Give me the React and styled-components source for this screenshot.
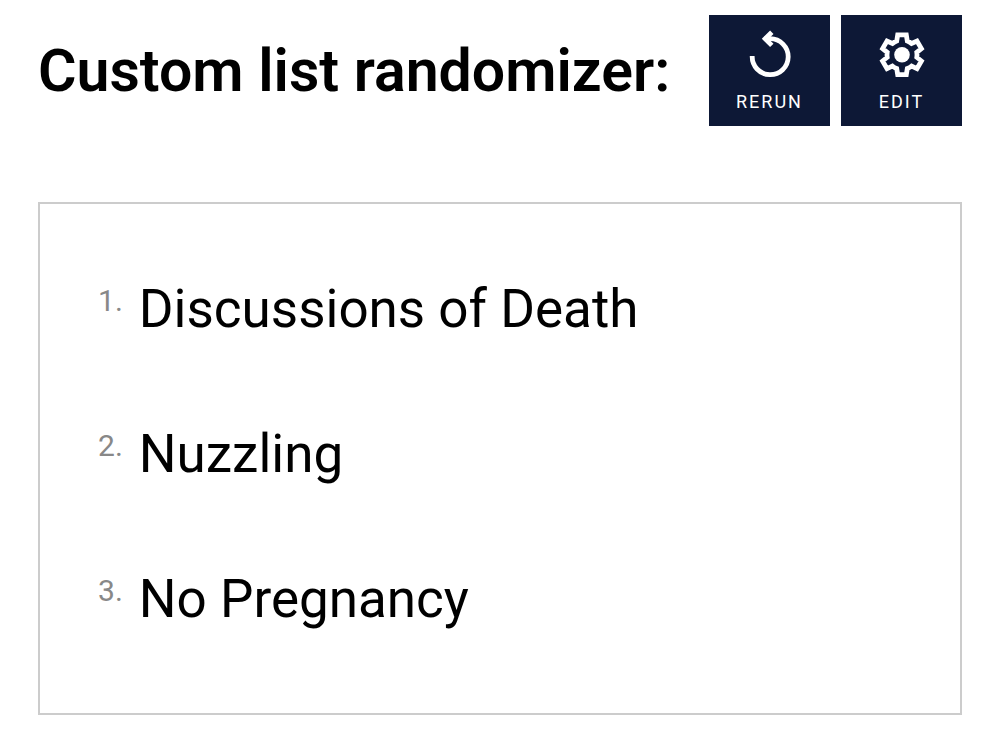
import React from 'react';
import styled, { createGlobalStyle } from 'styled-components';

const GlobalStyle = createGlobalStyle`
    * {
        box-sizing: border-box;
    }
    body {
        margin: 0;
        background: #ffffff;
        color: #000000;
        font-family: Roboto, 'Liberation Sans', sans-serif;
    }
`;

const Page = styled.main`
    padding: 15px 38px 26px;
`;

const Header = styled.header`
    display: flex;
    align-items: center;
    justify-content: space-between;
    gap: 20px;
`;

const Title = styled.h1`
    margin: 0;
    font-size: 59px;
    line-height: 68px;
    font-weight: 600;
`;

const Actions = styled.div`
    display: flex;
    flex-shrink: 0;
    gap: 11px;
`;

const ActionButton = styled.button`
    display: flex;
    flex-direction: column;
    align-items: center;
    gap: 10px;
    width: 121px;
    height: 111px;
    padding: 14px 0 0;
    border: 0;
    background: #0d1836;
    color: #ffffff;
    font-family: inherit;
    font-size: 18px;
    line-height: 22px;
    letter-spacing: 2px;
    text-transform: uppercase;
    cursor: pointer;
    & svg {
        width: 52px;
        height: 52px;
    }
`;

const Results = styled.ol`
    display: flex;
    flex-direction: column;
    gap: 63px;
    margin: 76px 0 0;
    padding: 64px 58px 73px;
    border: 2px solid #cccccc;
    list-style: none;
`;

const Result = styled.li`
    display: flex;
    gap: 16px;
    font-size: 53px;
    line-height: 82px;
`;

const Rank = styled.span`
    color: #888888;
    font-size: 30px;
    line-height: 66px;
`;

const RerunIcon = () => (
    <svg viewBox='0 0 52 52' fill='none' stroke='currentColor' strokeWidth='4.8' aria-hidden='true'>
        <path d='M8.2 27 A18 18 0 1 0 26.2 9.7 H20.5' />
        <path d='M27.8 3.2 L21.2 9.8 L27.8 16.4' />
    </svg>
);

const GearIcon = () => (
    <svg viewBox='0 0 52 52' fill='none' stroke='currentColor' strokeWidth='4.8' aria-hidden='true'>
        <path d='M21.7 5.9 H30.3 L31.3 12.1 Q33.7 13 35.6 14.5 L41 12 L45.4 19.6 L40.8 23.3 Q41.2 25.8 40.8 28.3 L45.4 32 L41 39.6 L35.6 37.1 Q33.7 38.6 31.3 39.5 L30.3 45.7 H21.7 L20.7 39.5 Q18.3 38.6 16.4 37.1 L11 39.6 L6.6 32 L11.2 28.3 Q10.8 25.8 11.2 23.3 L6.6 19.6 L11 12 L16.4 14.5 Q18.3 13 20.7 12.1 Z' />
        <circle cx='26' cy='25.8' r='7.8' fill='currentColor' stroke='none' />
    </svg>
);

const items = ['Discussions of Death', 'Nuzzling', 'No Pregnancy'];

const App = () => {
    return (
        <Page>
            <GlobalStyle />
            <Header>
                <Title>Custom list randomizer:</Title>
                <Actions>
                    <ActionButton type='button'>
                        <RerunIcon />
                        Rerun
                    </ActionButton>
                    <ActionButton type='button'>
                        <GearIcon />
                        Edit
                    </ActionButton>
                </Actions>
            </Header>
            <Results>
                {items.map((item, index) => (
                    <Result key={item}>
                        <Rank>{index + 1}.</Rank>
                        <span>{item}</span>
                    </Result>
                ))}
            </Results>
        </Page>
    );
};

export default App;
